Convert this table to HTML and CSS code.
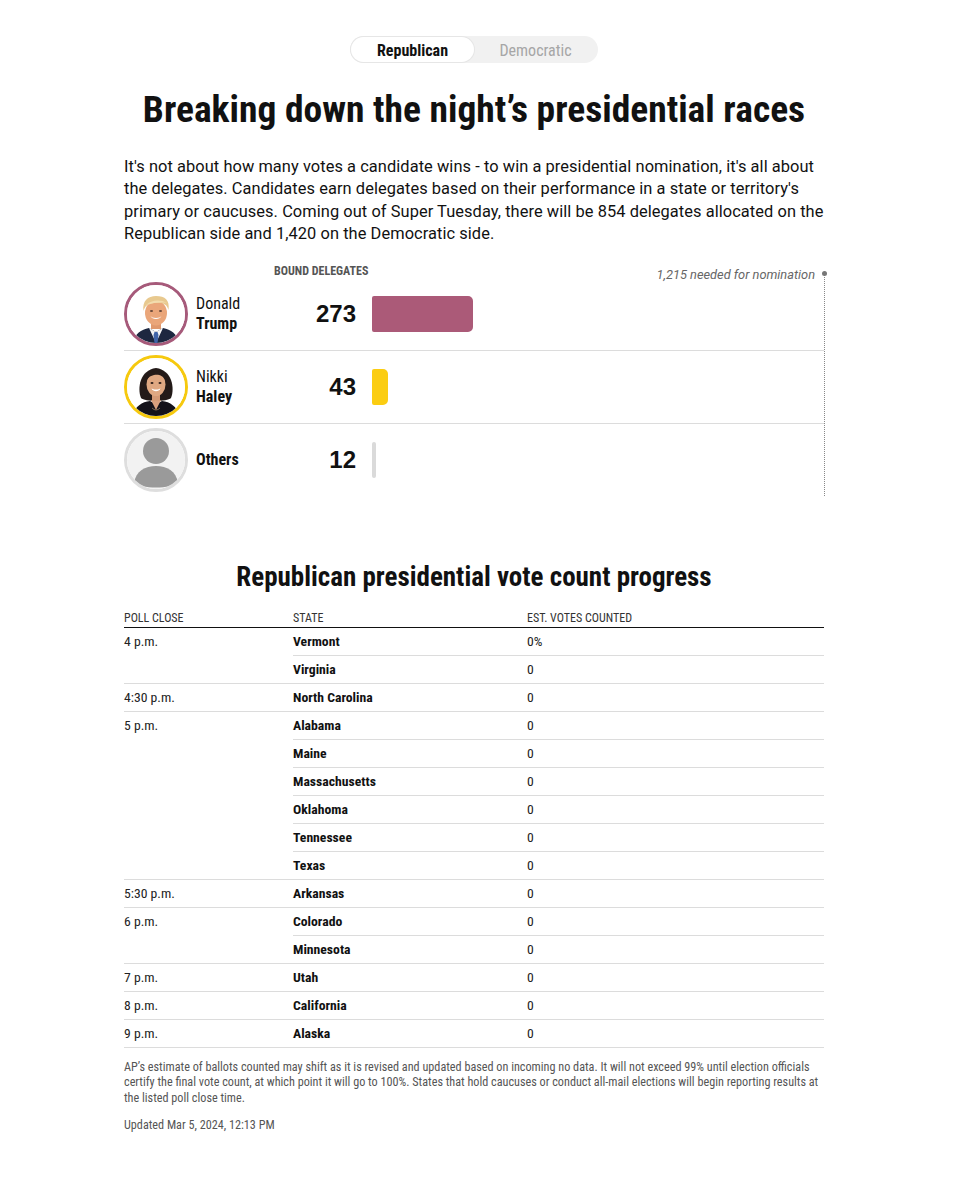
FILE: index.html
```html
<!DOCTYPE html>
<html lang="en">
<head>
<meta charset="utf-8">
<title>Breaking down the night’s presidential races</title>
<link rel="stylesheet" href="styles.css">
</head>
<body>
<div class="page">
  <div class="toggle-wrap">
    <div class="toggle">
      <span class="tab active">Republican</span>
      <span class="tab">Democratic</span>
    </div>
  </div>

  <h1 class="title">Breaking down the night’s presidential races</h1>

  <p class="intro">It's not about how many votes a candidate wins - to win a presidential nomination, it's all about the delegates. Candidates earn delegates based on their performance in a state or territory's primary or caucuses. Coming out of Super Tuesday, there will be 854 delegates allocated on the Republican side and 1,420 on the Democratic side.</p>

  <div class="delegates">
    <div class="del-head">
      <span class="bound">Bound delegates</span>
      <span class="needed">1,215 needed for nomination</span>
    </div>
    <div class="cand-list">
      <div class="cand">
        <div class="avatar trump">
          <svg viewBox="0 0 58 58" width="58" height="58">
            <rect width="58" height="58" fill="#fff"/>
            <path d="M6 58 C8 48 14 45 22 43 L29 47 L36 43 C44 45 50 48 52 58 Z" fill="#1d2740"/>
            <path d="M22 43 L29 58 L36 43 L29 47 Z" fill="#f4f4f4"/>
            <path d="M27.5 47 L30.5 47 L31.5 50 L30.5 58 L27.5 58 L26.5 50 Z" fill="#3f63a8"/>
            <rect x="24" y="34" width="10" height="10" fill="#e0996e"/>
            <ellipse cx="29" cy="28" rx="11" ry="12.5" fill="#eaa67a"/>
            <path d="M29 33 C26 33 24.5 32 23.5 31 C25 35 33 35 34.5 31 C33.5 32 32 33 29 33 Z" fill="#fff"/>
            <path d="M16.5 26 C15 16 21 11 29 11 C38 11 43 15 41.5 25 C40 20 37 18 33 18 C28 17 22 19 19 21 C18 22 17 24 16.5 26 Z" fill="#e8c98f"/>
            <path d="M19 20 C24 15 33 14 40 18 C36 17 28 17 19 20 Z" fill="#f3dcae"/>
            <ellipse cx="24.5" cy="26" rx="1.6" ry="0.9" fill="#6b4a3a"/>
            <ellipse cx="33.5" cy="26" rx="1.6" ry="0.9" fill="#6b4a3a"/>
          </svg>
        </div>
        <div class="name"><span class="first">Donald</span><span class="last">Trump</span></div>
        <div class="count">273</div>
        <div class="track"><div class="bar bar-trump" style="width:101px"></div></div>
      </div>
      <div class="cand">
        <div class="avatar haley">
          <svg viewBox="0 0 58 58" width="58" height="58">
            <rect width="58" height="58" fill="#fff"/>
            <path d="M14 40 C10 30 13 12 29 10 C45 12 48 30 44 40 C40 44 18 44 14 40 Z" fill="#231a18"/>
            <path d="M6 58 C8 48 15 44 23 43 L29 46 L35 43 C43 44 50 48 52 58 Z" fill="#14121a"/>
            <path d="M24 42 L29 52 L34 42 Z" fill="#d9a07e"/>
            <path d="M25 50 Q29 54 33 50" stroke="#bfa37a" stroke-width="0.6" fill="none"/>
            <rect x="25" y="34" width="8" height="9" fill="#d49a76"/>
            <ellipse cx="29" cy="26.5" rx="9.5" ry="11.5" fill="#dfa882"/>
            <path d="M19 24 C20 15 25 13 30 13 C36 13 39 17 39.5 23 C36 17 31 16 27 17 C23 18 20 20 19 24 Z" fill="#231a18"/>
            <path d="M29 31.5 C27 31.5 25.5 31 24.5 30.5 C26 34 32 34 33.5 30.5 C32.5 31 31 31.5 29 31.5 Z" fill="#fff"/>
            <ellipse cx="25" cy="25" rx="1.5" ry="0.9" fill="#2b1d18"/>
            <ellipse cx="33" cy="25" rx="1.5" ry="0.9" fill="#2b1d18"/>
          </svg>
        </div>
        <div class="name"><span class="first">Nikki</span><span class="last">Haley</span></div>
        <div class="count">43</div>
        <div class="track"><div class="bar bar-haley" style="width:16px"></div></div>
      </div>
      <div class="cand">
        <div class="avatar others">
          <svg viewBox="0 0 58 58" width="58" height="58">
            <rect width="58" height="58" fill="#f2f2f2"/>
            <circle cx="29" cy="20" r="13" fill="#9a9a9a"/>
            <path d="M7 52 C9 40 18 35 29 35 C40 35 49 40 51 52 C45 58 13 58 7 52 Z" fill="#9a9a9a"/>
          </svg>
        </div>
        <div class="name"><span class="last">Others</span></div>
        <div class="count">12</div>
        <div class="track"><div class="bar bar-others" style="width:4px"></div></div>
      </div>
    </div>
    <div class="threshold"></div>
  </div>

  <h2 class="subtitle">Republican presidential vote count progress</h2>

  <table class="progress">
    <thead>
      <tr><th class="c-time">Poll close</th><th class="c-state">State</th><th class="c-votes">Est. votes counted</th></tr>
    </thead>
    <tbody>
      <tr><td class="time" rowspan="2">4 p.m.</td><td class="state">Vermont</td><td class="votes">0%</td></tr>
      <tr><td class="state">Virginia</td><td class="votes">0</td></tr>
      <tr><td class="time">4:30 p.m.</td><td class="state">North Carolina</td><td class="votes">0</td></tr>
      <tr><td class="time" rowspan="6">5 p.m.</td><td class="state">Alabama</td><td class="votes">0</td></tr>
      <tr><td class="state">Maine</td><td class="votes">0</td></tr>
      <tr><td class="state">Massachusetts</td><td class="votes">0</td></tr>
      <tr><td class="state">Oklahoma</td><td class="votes">0</td></tr>
      <tr><td class="state">Tennessee</td><td class="votes">0</td></tr>
      <tr><td class="state">Texas</td><td class="votes">0</td></tr>
      <tr><td class="time">5:30 p.m.</td><td class="state">Arkansas</td><td class="votes">0</td></tr>
      <tr><td class="time" rowspan="2">6 p.m.</td><td class="state">Colorado</td><td class="votes">0</td></tr>
      <tr><td class="state">Minnesota</td><td class="votes">0</td></tr>
      <tr><td class="time">7 p.m.</td><td class="state">Utah</td><td class="votes">0</td></tr>
      <tr><td class="time">8 p.m.</td><td class="state">California</td><td class="votes">0</td></tr>
      <tr><td class="time">9 p.m.</td><td class="state">Alaska</td><td class="votes">0</td></tr>
    </tbody>
  </table>

  <p class="note">AP’s estimate of ballots counted may shift as it is revised and updated based on incoming no data. It will not exceed 99% until election officials certify the final vote count, at which point it will go to 100%. States that hold caucuses or conduct all-mail elections will begin reporting results at the listed poll close time.</p>
  <p class="updated">Updated Mar 5, 2024, 12:13 PM</p>
</div>
</body>
</html>
```

FILE: styles.css
```css
html, body {
  margin: 0;
  padding: 0;
  background: #fff;
  color: #111;
}

.page {
  width: 700px;
  margin: 0 0 0 124px;
  padding: 36px 0 40px;
  font-family: "Roboto Condensed", "Liberation Sans Narrow", "DejaVu Sans Condensed", Roboto, sans-serif;
}

/* toggle */
.toggle-wrap {
  display: flex;
  justify-content: center;
}
.toggle {
  display: flex;
  width: 248px;
  height: 27px;
  background: #f1f1f1;
  border-radius: 14px;
  box-sizing: border-box;
  padding: 1px;
}
.tab {
  flex: 1;
  display: flex;
  align-items: center;
  justify-content: center;
  padding-top: 1px;
  font-size: 16px;
  color: #a6a6a6;
  border-radius: 13px;
}
.tab.active {
  background: #fff;
  color: #111;
  font-weight: 700;
  box-shadow: 0 0 0 1px #e6e6e6;
}

/* headings */
.title {
  margin: 24px 0 0;
  font-size: 37.5px;
  line-height: 44px;
  font-weight: 700;
  text-align: center;
}
.intro {
  margin: 25px 0 0;
  font-family: Roboto, "Liberation Sans", sans-serif;
  font-size: 16.4px;
  letter-spacing: 0.07px;
  line-height: 22.4px;
  color: #111;
}

/* delegates */
.delegates {
  position: relative;
  margin-top: 18px;
}
.del-head {
  display: flex;
  justify-content: space-between;
  align-items: center;
  height: 14px;
}
.bound {
  margin-left: 150px;
  font-size: 12px;
  font-weight: 700;
  text-transform: uppercase;
  color: #555;
}
.needed {
  margin-right: 9px;
  font-family: Roboto, "Liberation Sans", sans-serif;
  font-style: italic;
  font-size: 12.8px;
  color: #666;
  position: relative;
  top: 4px;
}
.cand {
  display: flex;
  align-items: center;
  padding: 4px 0;
  border-bottom: 1px solid #dcdcdc;
}
.cand:last-child {
  border-bottom: none;
}
.avatar {
  width: 64px;
  height: 64px;
  box-sizing: border-box;
  border: 3px solid #ccc;
  border-radius: 50%;
  overflow: hidden;
  flex: none;
}
.avatar svg {
  display: block;
}
.avatar.trump { border-color: #a65a7a; }
.avatar.haley { border-color: #f6c90e; }
.avatar.others { border-color: #dedede; }

.name {
  width: 78px;
  margin-left: 8px;
  padding-top: 1px;
  display: flex;
  flex-direction: column;
  font-size: 16px;
  line-height: 20px;
  color: #111;
}
.name .last {
  font-weight: 700;
}
.count {
  width: 82px;
  text-align: right;
  font-family: "Liberation Sans", Arial, sans-serif;
  font-weight: 700;
  font-size: 24px;
  color: #111;
}
.track {
  flex: 1;
  margin-left: 16px;
  height: 36px;
}
.bar {
  height: 36px;
  border-radius: 2px 5px 5px 2px;
}
.bar-trump { background: #ab5a78; }
.bar-haley { background: #fbcd12; }
.bar-others { background: #dadada; border-radius: 2px; }

.threshold {
  position: absolute;
  right: -1px;
  top: 9px;
  bottom: 0;
  width: 0;
  border-left: 1px dotted #888;
}
.threshold::before {
  content: "";
  position: absolute;
  top: -2px;
  left: -3px;
  width: 5px;
  height: 5px;
  border-radius: 50%;
  background: #777;
}

/* progress table */
.subtitle {
  margin: 65px 0 0;
  font-size: 27px;
  line-height: 32px;
  font-weight: 700;
  text-align: center;
}
.progress {
  width: 100%;
  margin-top: 18px;
  border-collapse: collapse;
  font-size: 13.7px;
  color: #222;
}
.progress th {
  text-align: left;
  font-size: 12px;
  font-weight: 400;
  text-transform: uppercase;
  color: #333;
  padding: 0 0 2px;
  border-bottom: 1px solid #111;
  line-height: 14px;
}
.c-time { width: 169px; }
.c-state { width: 234px; }
.progress td {
  height: 27px;
  padding: 0;
  border-bottom: 1px solid #dcdcdc;
  vertical-align: middle;
  line-height: 16px;
}
.progress td.time {
  vertical-align: top;
  padding-top: 5px;
  height: auto;
}
.progress td.state {
  font-weight: 700;
  color: #111;
}

.note {
  margin: 12px 0 0;
  font-size: 12.2px;
  line-height: 15.5px;
  color: #555;
}
.updated {
  margin: 12px 0 0;
  font-size: 12.2px;
  line-height: 15px;
  color: #555;
}
```
